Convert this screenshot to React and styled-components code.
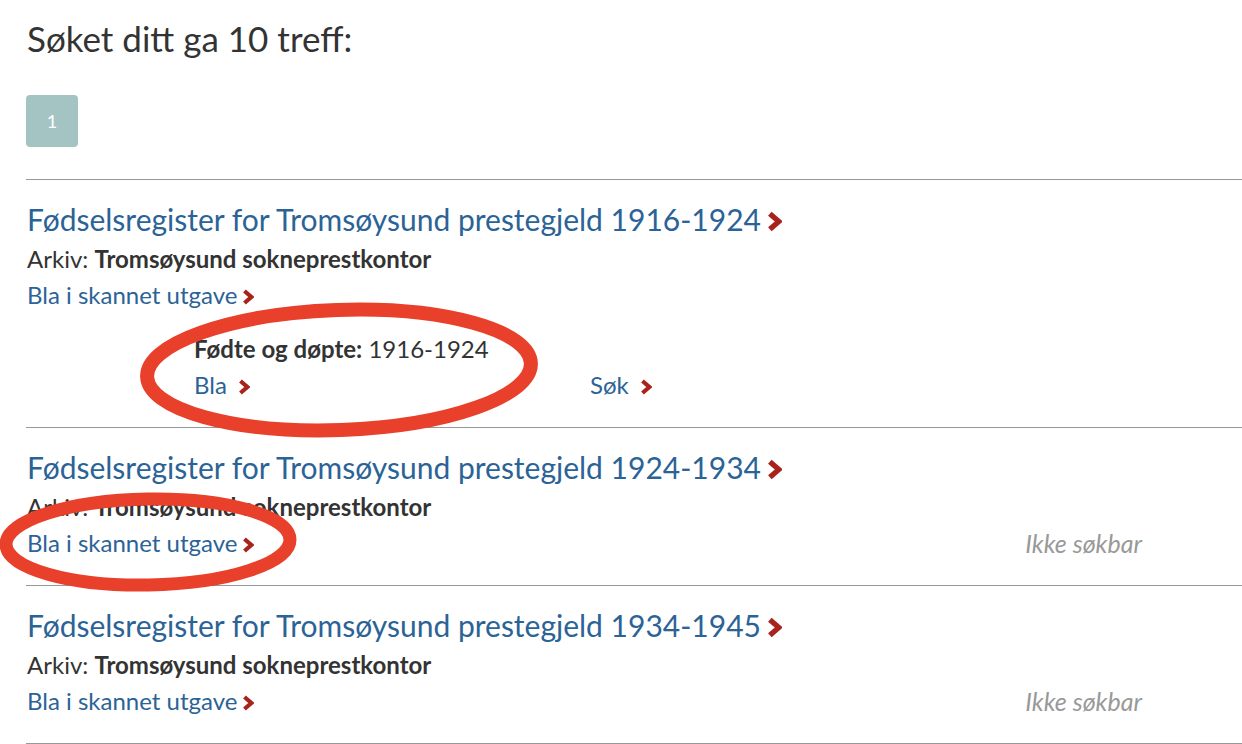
import styled, { createGlobalStyle } from "styled-components";

const GlobalStyle = createGlobalStyle`
  body {
    margin: 0;
    background: #fff;
    font-family: Lato, "Noto Sans", sans-serif;
    color: #333;
  }
`;

const results = [
  {
    id: 1,
    title: "Fødselsregister for Tromsøysund prestegjeld 1916-1924",
    archive: "Tromsøysund sokneprestkontor",
    searchable: true,
    sub: { label: "Fødte og døpte:", years: "1916-1924" },
  },
  {
    id: 2,
    title: "Fødselsregister for Tromsøysund prestegjeld 1924-1934",
    archive: "Tromsøysund sokneprestkontor",
    searchable: false,
  },
  {
    id: 3,
    title: "Fødselsregister for Tromsøysund prestegjeld 1934-1945",
    archive: "Tromsøysund sokneprestkontor",
    searchable: false,
  },
];

const Chevron = ({ big, wide }) => (
  <ChevronIcon
    $big={big}
    $wide={wide}
    width={big ? 15 : 12}
    height={big ? 21 : 16}
    viewBox="0 0 10 14"
  >
    <path
      d="M1.9 1.8 L7.9 7 L1.9 12.2"
      fill="none"
      stroke="#a8231c"
      strokeWidth="3.6"
      strokeLinecap="butt"
      strokeLinejoin="miter"
    />
  </ChevronIcon>
);

export default () => {
  return (
    <Page>
      <GlobalStyle />
      <Heading>Søket ditt ga 10 treff:</Heading>
      <Pager>
        <PageButton>1</PageButton>
      </Pager>
      <List>
        {results.map((item) => (
          <Result key={item.id}>
            <Title href="#">
              {item.title}
              <Chevron big />
            </Title>
            <Archive>
              Arkiv: <b>{item.archive}</b>
            </Archive>
            <BrowseRow>
              <LinkText href="#">
                Bla i skannet utgave
                <Chevron />
              </LinkText>
              {!item.searchable && <NotSearchable>Ikke søkbar</NotSearchable>}
            </BrowseRow>
            {item.sub && (
              <SubBlock>
                <SubLabel>
                  <b>{item.sub.label}</b> {item.sub.years}
                </SubLabel>
                <SubLinks>
                  <LinkText href="#">
                    Bla
                    <Chevron wide />
                  </LinkText>
                  <LinkText href="#">
                    Søk
                    <Chevron wide />
                  </LinkText>
                </SubLinks>
              </SubBlock>
            )}
          </Result>
        ))}
      </List>
      <Marks width="1242" height="744" viewBox="0 0 1242 744">
        <ellipse
          cx="339"
          cy="370"
          rx="192"
          ry="60"
          transform="rotate(-2 339 370)"
          fill="none"
          stroke="#e8402a"
          strokeWidth="14"
        />
        <ellipse
          cx="148"
          cy="542"
          rx="142"
          ry="43"
          transform="rotate(-1 148 542)"
          fill="none"
          stroke="#e8402a"
          strokeWidth="13"
        />
      </Marks>
    </Page>
  );
};

const Page = styled.div`
  position: relative;
  width: 1242px;
  height: 744px;
  overflow: hidden;
  padding-left: 26px;
  box-sizing: border-box;
`;

const Heading = styled.h1`
  margin: 0;
  padding-top: 16px;
  font-size: 35px;
  font-weight: 400;
  line-height: 44px;
  color: #333;
  padding-left: 1px;
`;

const Pager = styled.div`
  display: flex;
  margin-top: 35px;
  margin-bottom: 32px;
`;

const PageButton = styled.div`
  width: 52px;
  height: 52px;
  border-radius: 4px;
  background: #a4c4c4;
  color: #fff;
  font-size: 18px;
  display: flex;
  align-items: center;
  justify-content: center;
`;

const List = styled.div`
  border-top: 1px solid #999;
`;

const Result = styled.div`
  padding: 19px 0 24px 1px;
  border-bottom: 1px solid #999;
`;

const ChevronIcon = styled.svg`
  display: inline-block;
  margin-left: ${(p) => (p.$wide ? "11px" : p.$big ? "6px" : "5px")};
  vertical-align: -1px;
`;

const Title = styled.a`
  display: block;
  font-size: 30px;
  line-height: 40px;
  color: #2b6396;
  text-decoration: none;
`;

const Archive = styled.div`
  margin-top: 2px;
  font-size: 24px;
  line-height: 36px;
  color: #333;

  b {
    font-weight: 700;
  }
`;

const BrowseRow = styled.div`
  display: flex;
  justify-content: space-between;
  align-items: center;
  padding-right: 100px;
  line-height: 36px;
`;

const LinkText = styled.a`
  font-size: 24px;
  line-height: 36px;
  color: #2b6396;
  text-decoration: none;
`;

const NotSearchable = styled.span`
  font-size: 25px;
  font-style: italic;
  color: #999;
`;

const SubBlock = styled.div`
  margin-top: 18px;
  padding-left: 167px;
`;

const SubLabel = styled.div`
  font-size: 24px;
  line-height: 36px;
  color: #333;
`;

const SubLinks = styled.div`
  display: grid;
  grid-template-columns: 396px auto;
`;

const Marks = styled.svg`
  position: absolute;
  left: 0;
  top: 0;
  pointer-events: none;
`;
